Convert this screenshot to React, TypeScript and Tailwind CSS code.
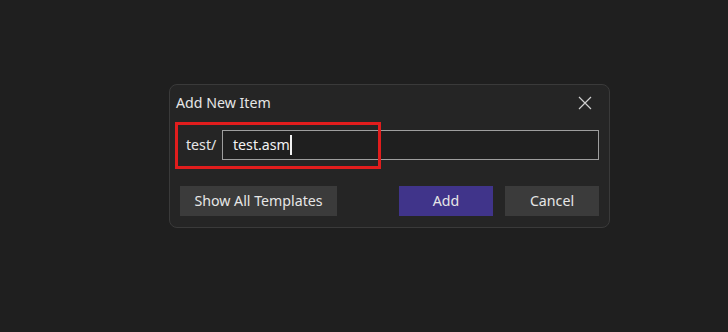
import React from "react";

const font = { fontFamily: '"Noto Sans", "Open Sans", sans-serif' };

const CloseIcon = () => (
  <svg width="14" height="14" viewBox="0 0 14 14" className="text-[#cfcfcf]">
    <path d="M1 1 L13 13 M13 1 L1 13" stroke="currentColor" strokeWidth="1.2" fill="none" />
  </svg>
);

export default function App() {
  return (
    <div
      className="w-[728px] h-[332px] bg-[#1f1f1f] pt-[84px] pl-[169px] overflow-hidden"
      style={font}
    >
      <div className="relative w-[441px] h-[144px] rounded-lg border border-[#3a3a3a] bg-[#252525] flex flex-col">
        <div className="h-[36px] flex items-center justify-between pl-[6px] pr-[17px]">
          <span className="text-[14.2px] text-[#e6e6e6]">Add New Item</span>
          <CloseIcon />
        </div>

        <div className="mt-[9px] h-[30px] flex items-center pl-[16px] pr-[10px]">
          <span className="w-[36px] text-[14.2px] text-[#e6e6e6]">test/</span>
          <div className="flex-1 h-[30px] border border-[#9e9e9e] bg-[#1f1f1f] flex items-center pl-[10px]">
            <span className="text-[14.2px] text-[#f2f2f2]">test.asm</span>
            <span className="w-[2px] h-[20px] bg-[#f2f2f2]" />
          </div>
        </div>

        <div className="mt-[26px] h-[30px] flex items-center pl-[10px] pr-[10px]">
          <button className="w-[157px] h-[30px] bg-[#3b3b3b] text-[14.2px] text-[#e6e6e6]">
            Show All Templates
          </button>
          <div className="flex-1" />
          <button className="w-[94px] h-[30px] bg-[#40348a] text-[14.2px] text-[#e6e6e6]">
            Add
          </button>
          <button className="ml-[12px] w-[94px] h-[30px] bg-[#3b3b3b] text-[14.2px] text-[#e6e6e6]">
            Cancel
          </button>
        </div>

        <div className="absolute left-[5px] top-[37px] w-[206px] h-[47px] border-[3px] border-[#e11d1d] pointer-events-none" />
      </div>
    </div>
  );
}
